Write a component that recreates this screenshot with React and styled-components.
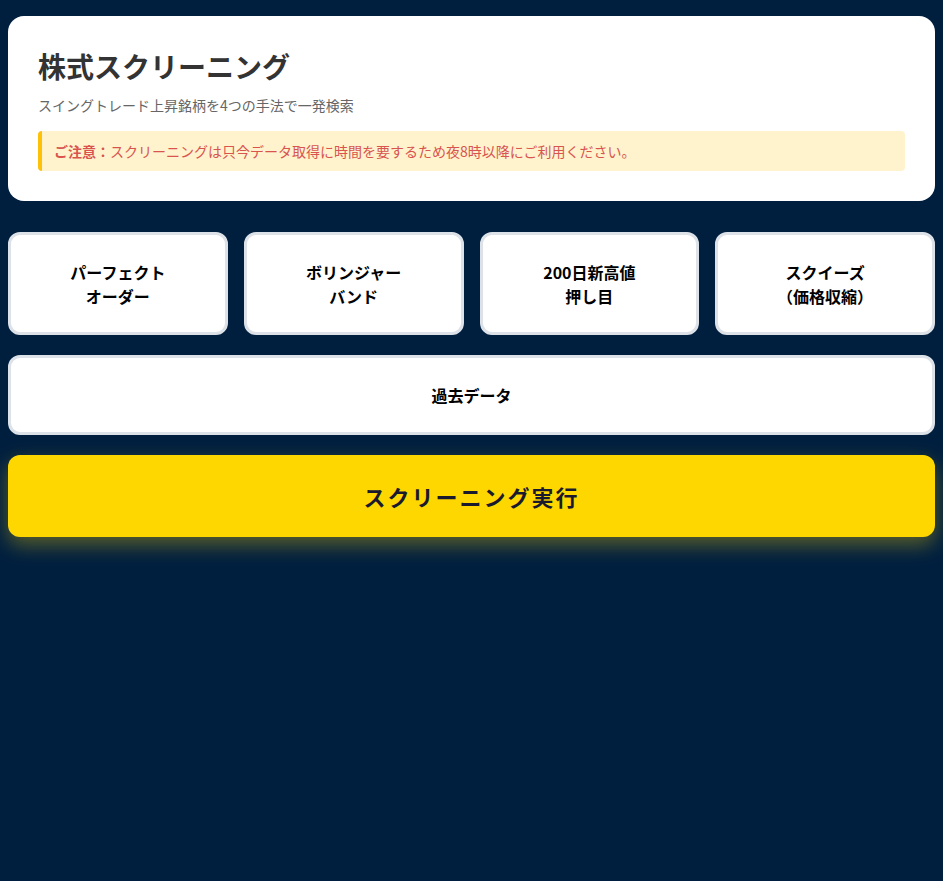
import styled, { createGlobalStyle } from 'styled-components'

const GlobalStyle = createGlobalStyle`
  html, body {
    margin: 0;
    padding: 0;
    background: #001f3f;
    font-family: "Noto Sans CJK JP", "Noto Sans", sans-serif;
  }
`

const Page = styled.div`
  min-height: 881px;
  box-sizing: border-box;
  padding: 16px 8px;
  display: flex;
  flex-direction: column;
  gap: 20px;
`

const Card = styled.div`
  background: #fff;
  border-radius: 16px;
  padding: 31px 30px 30px;
  margin-bottom: 11px;
`

const Title = styled.h1`
  margin: 0 0 9px;
  font-size: 28px;
  font-weight: 700;
  line-height: 1.4;
  color: #333;
`

const Subtitle = styled.p`
  margin: 0 0 15px;
  font-size: 14px;
  line-height: 1.5;
  color: #666;
`

const Notice = styled.div`
  background: #fff3cd;
  border-left: 4px solid #ffc107;
  border-radius: 4px;
  padding: 10px 12px;
  font-size: 14px;
  line-height: 20px;
  color: #d9534f;

  strong {
    font-weight: 700;
  }
`

const MethodGrid = styled.div`
  display: grid;
  grid-template-columns: repeat(4, 1fr);
  gap: 16px;
`

const OptionButton = styled.button`
  height: ${p => p.$height || 103}px;
  background: #fff;
  border: 3px solid #dde2e8;
  border-radius: 12px;
  font-family: inherit;
  font-size: 16px;
  font-weight: 700;
  line-height: 1.5;
  color: #000;
  cursor: pointer;
`

const RunButton = styled.button`
  height: 82px;
  background: #ffd700;
  border: none;
  border-radius: 12px;
  font-family: inherit;
  font-size: 22px;
  font-weight: 700;
  letter-spacing: 2px;
  color: #1a1a2e;
  cursor: pointer;
  box-shadow: 0 8px 20px rgba(255, 215, 0, 0.35);
`

const methods = [
  ['パーフェクト', 'オーダー'],
  ['ボリンジャー', 'バンド'],
  ['200日新高値', '押し目'],
  ['スクイーズ', '（価格収縮）'],
]

export default function App() {
  return (
    <>
      <GlobalStyle />
      <Page>
        <Card>
          <Title>株式スクリーニング</Title>
          <Subtitle>スイングトレード上昇銘柄を4つの手法で一発検索</Subtitle>
          <Notice>
            <strong>ご注意：</strong>スクリーニングは只今データ取得に時間を要するため夜8時以降にご利用ください。
          </Notice>
        </Card>
        <MethodGrid>
          {methods.map(([a, b]) => (
            <OptionButton key={a}>
              {a}
              <br />
              {b}
            </OptionButton>
          ))}
        </MethodGrid>
        <OptionButton $height={80}>過去データ</OptionButton>
        <RunButton>スクリーニング実行</RunButton>
      </Page>
    </>
  )
}
